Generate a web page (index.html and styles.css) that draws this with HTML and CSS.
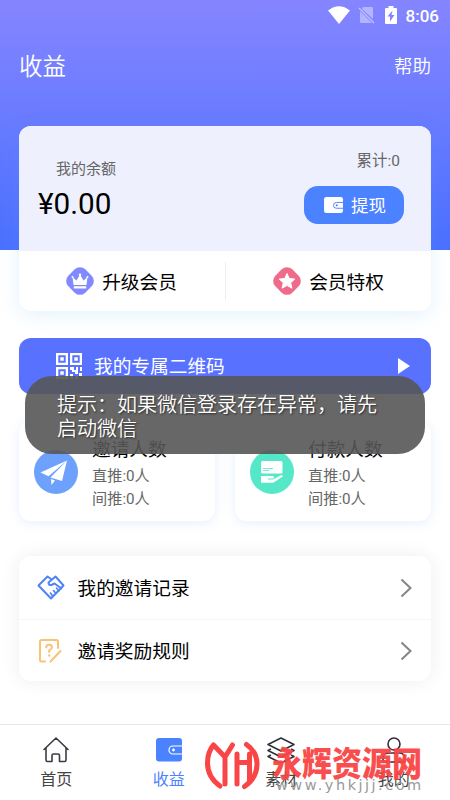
FILE: index.html
```html
<!DOCTYPE html>
<html lang="zh-CN">
<head>
<meta charset="utf-8">
<title>收益</title>
<link rel="stylesheet" href="styles.css">
</head>
<body>
<div class="app">
  <header class="hero">
    <div class="status">
      <svg width="22" height="18" viewBox="0 0 22 18"><path d="M0 4.5Q11-4 22 4.5L11 18Z" fill="#fff"/></svg>
      <svg class="nosim" width="18" height="18" viewBox="0 0 18 18"><path d="M5 1h9q1 0 1 1v11L4 3ZM2 5l12 12H3q-1 0-1-1Z" fill="#fff" opacity=".4"/><path d="M1 2l15 15" stroke="#fff" stroke-width="1.2" opacity=".5"/></svg>
      <svg class="battery" width="12" height="18" viewBox="0 0 12 18"><path fill-rule="evenodd" d="M3.5 0h5v2H11q1 0 1 1v14q0 1-1 1H1q-1 0-1-1V3q0-1 1-1h2.500ZM7.500 4.500l-5 6H5v5l4.500-6.500H6.500Z" fill="#fff"/></svg>
      <span class="clock">8:06</span>
    </div>
    <div class="topbar"><h1>收益</h1><span class="help">帮助</span></div>
  </header>

  <main>
    <section class="wallet">
      <div class="balance">
        <div class="money"><div class="caption">我的余额</div><div class="amount">¥0.00</div></div>
        <div class="cash">
          <div class="total">累计:0</div>
          <button class="withdraw">
            <svg width="19" height="16" viewBox="0 0 26 22"><rect width="26" height="22" rx="3" fill="#fff"/><path d="M26 7.500h-9a4 4 0 0 0 0 8h9" fill="none" stroke="#4b82ff" stroke-width="1.300"/><circle cx="17.500" cy="11.500" r="1.400" fill="#4b82ff"/></svg>
            <span>提现</span>
          </button>
        </div>
      </div>
      <div class="member">
        <div class="perk">
          <svg width="28" height="28" viewBox="0 0 28 28"><rect x="2" y="2" width="24" height="24" rx="7.500" transform="rotate(45 14 14)" fill="#8289ff"/><path d="M7.500 18 6.500 10l4 3.500L14 7.500l3.500 6 4-3.500-1 8ZM7.800 19.200h12.400v2.200H7.800Z" fill="#fff"/><g fill="#fff"><circle cx="6.500" cy="10" r="1"/><circle cx="14" cy="7.800" r="1.200"/><circle cx="21.500" cy="10" r="1"/></g></svg>
          <span>升级会员</span>
        </div>
        <div class="perk">
          <svg width="28" height="28" viewBox="0 0 28 28"><rect x="2" y="2" width="24" height="24" rx="7.500" transform="rotate(45 14 14)" fill="#f06b8b"/><path d="m14 6.500 2.300 5 5.500.6-4.100 3.700 1.200 5.400L14 18.400l-4.900 2.800 1.200-5.400-4.100-3.700 5.500-.6Z" fill="#fff" stroke="#fff" stroke-linejoin="round"/></svg>
          <span>会员特权</span>
        </div>
      </div>
    </section>

    <section class="qr">
      <svg width="26" height="26" viewBox="0 0 26 26" fill="#fff"><path fill-rule="evenodd" d="M0 0h12v12H0ZM2.300 2.300v7.400h7.400V2.300ZM14 0h12v12H14ZM16.300 2.300v7.400h7.400V2.300ZM0 14h12v12H0ZM2.300 16.300v7.400h7.400v-7.400Z"/><path d="M4.300 4.300h3.500v3.500H4.300ZM18.300 4.300h3.500v3.500h-3.500ZM4.300 18.300h3.500v3.500H4.300ZM14 14h4v3h4v4h-3v-2h-3v-2h-2ZM20 14h2v3h-2ZM24 14h2v4h-2ZM14 21h3v5h-3ZM19 23h3v3h-3ZM23 20h3v3h-3Z"/></svg>
      <span>我的专属二维码</span>
      <svg class="play" width="12" height="16" viewBox="0 0 12 16"><path d="M0 0 12 8 0 16Z" fill="#fff"/></svg>
    </section>

    <section class="stats">
      <div class="stat">
        <svg width="44" height="44" viewBox="0 0 44 44"><circle cx="22" cy="22" r="22" fill="#6da1fc"/><path d="M33 10.500 6.500 22.500l8 3.800ZM33 10.500 16.500 27.500l11.500 3.500ZM17 29l4 1.500-3.500 4.500Z" fill="#fff"/></svg>
        <div><h2>邀请人数</h2><p>直推:0人</p><p>间推:0人</p></div>
      </div>
      <div class="stat">
        <svg width="44" height="44" viewBox="0 0 44 44"><circle cx="22" cy="22" r="22" fill="#55e8c8"/><rect x="11" y="11" width="21.500" height="12.500" rx="1.500" fill="#fff"/><path d="M13 18.500h10M13 20.500h6" stroke="#55e8c8" stroke-width=".8"/><path d="M11 26h4.500q2-.7 4 0h3q1.500 0 1.500 1.200t-1.500 1.300H18v1h5l7.500-4q2-.6 2.500.8L24.500 32q-1 .8-2.500.8H11Z" fill="#fff"/></svg>
        <div><h2>付款人数</h2><p>直推:0人</p><p>间推:0人</p></div>
      </div>
    </section>

    <section class="menu">
      <div class="row">
        <svg width="28" height="26" viewBox="0 0 28 26" fill="none" stroke="#4f83f5" stroke-width="2" stroke-linejoin="round" stroke-linecap="round"><path d="M14 4 10.500 1.500 1.500 10.500l12.500 13 12.500-13L18.500 1.500 11.500 7.500q0 3 3 2.500l3-1.500 7 5"/><path d="m13.500 18 2 3M16.500 15.500l2.500 3M19.500 13l2.500 3" stroke-width="1.600"/></svg>
        <span>我的邀请记录</span>
        <svg class="chev" width="12" height="20" viewBox="0 0 12 20"><path d="m1.500 1.500 9 8.500-9 8.500" fill="none" stroke="#858585" stroke-width="2"/></svg>
      </div>
      <div class="row">
        <svg width="28" height="26" viewBox="0 0 28 26" fill="none" stroke="#f8c377" stroke-width="2" stroke-linecap="round" stroke-linejoin="round"><path d="M8 23.500H4.500Q3 23.500 3 22V3.500Q3 2 4.500 2h15Q21 2 21 3.500V10M13.500 23.500 23.500 13"/><path d="M9.200 9.500q0-2.700 2.900-2.700 2.900 0 2.900 2.500 0 1.700-2.800 3.200V14"/><path d="M12.200 17.500v.1" stroke-width="2.400"/></svg>
        <span>邀请奖励规则</span>
        <svg class="chev" width="12" height="20" viewBox="0 0 12 20"><path d="m1.500 1.500 9 8.500-9 8.500" fill="none" stroke="#858585" stroke-width="2"/></svg>
      </div>
    </section>
  </main>

  <nav class="tabs">
    <div class="tab">
      <svg width="26" height="26" viewBox="0 0 26 26" fill="none" stroke="#3b3b48" stroke-width="1.600" stroke-linejoin="round" stroke-linecap="round"><path d="M1 12.500 13 1l12 11.500M3 11v12q0 1.500 1.500 1.500H9v-6Q9 17 10.500 17h4.500q1.500 0 1.500 1.500v6h5Q23 24.500 23 23V11"/></svg>
      <span>首页</span>
    </div>
    <div class="tab active">
      <svg width="26" height="26" viewBox="0 0 26 26"><rect y="1" width="26" height="23.500" rx="3" fill="#4b82ff"/><path d="M26 9h-9a4 4 0 0 0 0 8h9" fill="none" stroke="#fff" stroke-width="1.200"/><circle cx="17.500" cy="13" r="1.400" fill="#fff"/></svg>
      <span>收益</span>
    </div>
    <div class="tab">
      <svg width="28" height="26" viewBox="0 0 28 26" fill="none" stroke="#30303c" stroke-width="1.600" stroke-linejoin="round"><path d="M14 1 27 7.500 14 14 1 7.500ZM4 12l-3 1.500L14 20l13-6.500-3-1.500M4 18l-3 1.500L14 26l13-6.500-3-1.500"/></svg>
      <span>素材</span>
    </div>
    <div class="tab">
      <svg width="26" height="26" viewBox="0 0 26 26" fill="none" stroke="#30303c" stroke-width="1.600"><circle cx="13" cy="7" r="6"/><path d="M2 25v-3q0-6 6-6h10q6 0 6 6v3Z"/></svg>
      <span>我的</span>
    </div>
  </nav>

  <div class="toast">提示：如果微信登录存在异常，请先启动微信</div>

  <div class="watermark">
    <svg width="56" height="50" viewBox="0 0 56 50" fill="none" stroke="#f94545" stroke-width="5" stroke-linecap="round" stroke-linejoin="round"><path d="M15 46Q2.500 37 2.500 23 2.500 12 8.500 5L20 17 27.500 5M20 17V44M32 14V44M32 22.500H44.500M44.500 14V41M41.500 4.500Q52 12 52 24 52 38 39.500 46.500"/></svg>
    <div class="brand"><span class="name">永辉资源网</span><span class="site">www.yhkjjj.com</span></div>
  </div>
</div>
</body>
</html>
```
FILE: styles.css
```css
* { box-sizing: border-box; }
body { margin: 0; background: #fff; font-family: "Noto Sans CJK SC", sans-serif; color: #111; }
h1, h2, p { margin: 0; font-weight: 400; }
svg { display: block; flex: none; overflow: visible; }
.app { position: relative; width: 450px; height: 800px; overflow: hidden; display: flex; flex-direction: column; }
.hero { height: 250px; flex: none; background: linear-gradient(#8585ff, #4a70ff); color: #fff; }
.status { height: 30px; display: flex; align-items: center; justify-content: flex-end; padding: 0 11px 0 0; }
.nosim { margin-left: 8px; }
.battery { margin: 0 9px 0 9px; }
.clock { font: 500 17px/30px Roboto, sans-serif; padding-top: 2px; }
.topbar { display: flex; justify-content: space-between; align-items: center; padding: 0 19px; height: 70px; }
.topbar h1 { font-size: 23.5px; font-weight: 350; }
.help { font-size: 18.5px; font-weight: 350; }
main { margin: -124px 19px 0; flex: 1; }
.wallet { height: 185px; border-radius: 12px; background: #fff; overflow: hidden; box-shadow: 0 4px 20px rgba(75, 170, 240, .15); }
.balance { height: 125px; background: #eef0fe; display: flex; justify-content: space-between; padding: 0 27px 0 19px; }
.caption { font-size: 15px; line-height: 20px; color: #666; padding: 32px 0 0 18px; }
.amount { font: 29.700px/36px Roboto, "Noto Sans CJK SC", sans-serif; margin-top: 8px; color: #000; }
.cash { display: flex; flex-direction: column; align-items: flex-end; }
.total { font: 15.500px/20px Roboto, "Noto Sans CJK SC", sans-serif; color: #666; margin: 25px 4px 0 0; }
.withdraw { width: 100px; height: 38px; margin-top: 15px; border: 0; border-radius: 14px; background: #4b82ff; color: #fff; font: 17.500px/38px "Noto Sans CJK SC", sans-serif; display: flex; align-items: center; gap: 8px; padding: 0 0 0 20px; }
.member { height: 60px; display: flex; align-items: center; }
.perk { flex: 1; height: 38px; display: flex; align-items: center; justify-content: center; gap: 8px; font-size: 18.700px; padding-right: 1px; color: #000; }
.perk span { margin-top: -2px; }
.perk + .perk { border-left: 1px solid #eee; padding-right: 0; }
.qr { margin-top: 26.500px; height: 56px; border-radius: 12px; background: #5872ff; color: #fff; font-size: 18.700px; display: flex; align-items: center; gap: 12px; padding: 0 21px 0 37px; }
.qr span { margin-top: -2px; }
.play { margin-left: auto; }
.stats { margin-top: 27.500px; display: grid; grid-template-columns: 1fr 1fr; gap: 20px; }
.stat { height: 100px; border-radius: 12px; background: #fff; box-shadow: 0 2px 12px rgba(75, 150, 240, .14); display: flex; gap: 14px; padding: 13px 15px 0; }
.stat > svg { margin-top: 16px; }
.stat h2 { font-size: 18.700px; line-height: 28px; color: #000; }
.stat p { font: 15.200px/22.500px Roboto, "Noto Sans CJK SC", sans-serif; color: #666; }
.stat h2 + p { margin-top: 3px; }
.menu { margin-top: 35px; border-radius: 12px; background: #fff; box-shadow: 0 0 20px rgba(0, 0, 0, .07); }
.row { height: 63px; display: flex; align-items: center; gap: 12.500px; padding: 0 19px 0 18px; font-size: 18.700px; color: #000; }
.row span { margin-top: -2px; }
.row + .row { height: 62px; border-top: 1px solid #f5f5f5; }
.chev { margin-left: auto; }
.tabs { height: 76px; flex: none; border-top: 1px solid #e8e8e8; background: #fff; display: grid; grid-template-columns: repeat(4, 1fr); }
.tab { display: flex; flex-direction: column; align-items: center; padding-top: 12px; font-size: 16px; line-height: 22px; color: #444; }
.tab span { margin-top: 4px; }
.active { color: #4b82ff; }
.toast { position: absolute; left: 25px; top: 376px; width: 400px; height: 78px; border-radius: 27px; background: rgba(86, 86, 86, .9); color: #fff; font-size: 20px; font-weight: 350; line-height: 24px; padding: 16px 32px; text-shadow: 1px 1px 2px rgba(0, 0, 0, .6); }
.watermark { position: absolute; left: 205px; top: 740px; display: flex; gap: 11px; }
.brand { display: flex; flex-direction: column; }
.name { font-size: 30px; font-weight: 900; line-height: 36px; margin-top: 3px; color: #f94545; opacity: .95; white-space: nowrap; transform: scaleY(1.12); }
.site { font: 14.500px/16px "DejaVu Sans", sans-serif; letter-spacing: 2.500px; color: #999; margin: -2px 0 0 4px; white-space: nowrap; }
```
